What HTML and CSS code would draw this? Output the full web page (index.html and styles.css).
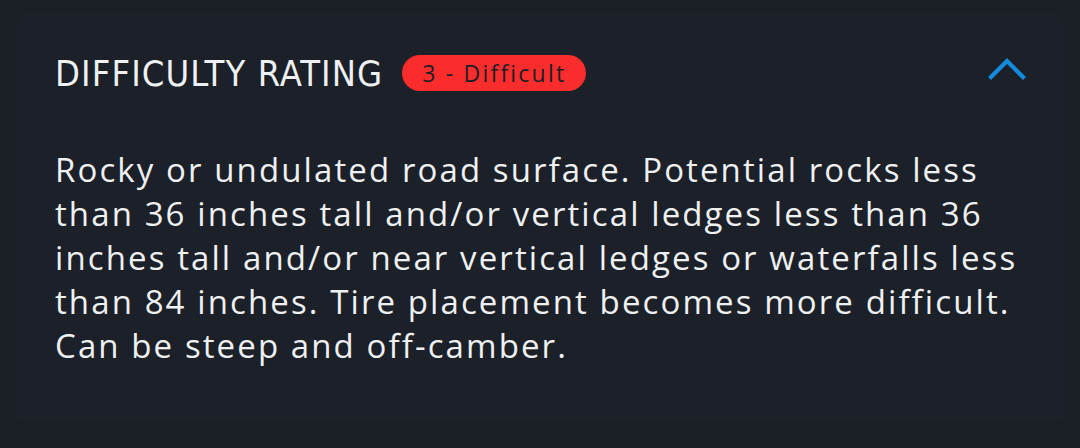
FILE: index.html
```html
<!DOCTYPE html>
<html lang="en">
<head>
<meta charset="utf-8">
<title>Difficulty Rating</title>
<link rel="stylesheet" href="styles.css">
</head>
<body>
<section class="panel">
  <header class="panel-head">
    <h2 class="panel-title">DIFFICULTY RATING</h2>
    <span class="rating-badge">3 - Difficult</span>
    <button class="collapse-btn" aria-label="Collapse">
      <svg width="38" height="24" viewBox="0 0 38 24">
        <path d="M3 20 L19 4 L35 20" fill="none" stroke="#1589dc" stroke-width="4.2" stroke-linecap="square" stroke-linejoin="miter"/>
      </svg>
    </button>
  </header>
  <p class="panel-text">Rocky or undulated road surface. Potential rocks less than 36 inches tall and/or vertical ledges less than 36 inches tall and/or near vertical ledges or waterfalls less than 84 inches. Tire placement becomes more difficult. Can be steep and off-camber.</p>
</section>
</body>
</html>
```
FILE: styles.css
```css
html, body {
  margin: 0;
  padding: 0;
  background: #1a1e25;
}

body {
  width: 1080px;
  height: 448px;
  padding: 14px 16px 0;
  box-sizing: border-box;
}

.panel {
  background: #1c2028;
  border-radius: 12px;
  padding: 37px 38px 0 39px;
  height: 408px;
  box-sizing: border-box;
}

.panel-head {
  display: flex;
  align-items: center;
  height: 44px;
}

.panel-title {
  margin: 0;
  font-family: "DejaVu Sans Condensed", "DejaVu Sans", sans-serif;
  font-weight: 400;
  font-size: 36px;
  letter-spacing: 1.1px;
  color: #eef0f2;
}

.rating-badge {
  margin-left: 19px;
  height: 36px;
  padding: 0 20px 0 20px;
  display: inline-flex;
  align-items: center;
  border-radius: 18px;
  background: #fb2c2c;
  color: #1b1f26;
  font-family: "Open Sans", sans-serif;
  font-size: 23px;
  letter-spacing: 2.2px;
}

.collapse-btn {
  margin-left: auto;
  padding: 0;
  border: 0;
  background: none;
  display: flex;
  margin-top: -8px;
}

.panel-text {
  margin: 53px -12px 0 0;
  font-family: "Open Sans", sans-serif;
  font-size: 33px;
  line-height: 44px;
  letter-spacing: 2.1px;
  color: #eef0f2;
}
```
